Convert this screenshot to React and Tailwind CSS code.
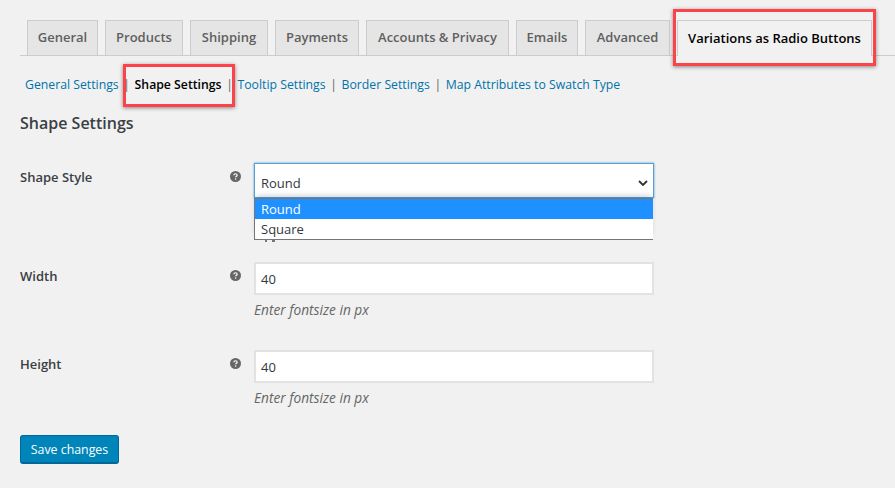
import React from 'react';

const tabs = [
  { label: 'General', w: 'w-[71px]' },
  { label: 'Products', w: 'w-[78px]' },
  { label: 'Shipping', w: 'w-[78px]' },
  { label: 'Payments', w: 'w-[84px]' },
  { label: 'Accounts & Privacy', w: 'w-[143px]' },
  { label: 'Emails', w: 'w-[62px]' },
  { label: 'Advanced', w: 'w-[85px]' },
];

const links = ['General Settings', 'Shape Settings', 'Tooltip Settings', 'Border Settings', 'Map Attributes to Swatch Type'];

const HelpIcon = () => (
  <svg viewBox="0 0 12 12" className="w-[11px] h-[11px]">
    <circle cx="6" cy="6" r="6" fill="#666" />
    <path d="M4.2 4.6c0-1 .8-1.6 1.8-1.6s1.8.6 1.8 1.5c0 1.3-1.6 1.3-1.6 2.4" fill="none" stroke="#fff" strokeWidth="1.3" />
    <rect x="5.4" y="8" width="1.4" height="1.4" fill="#fff" />
  </svg>
);

const Field = ({ label, className }) => (
  <div className={`flex pl-[20px] ${className}`}>
    <div className="w-[210px] pt-[5px] text-[13px] leading-[18px] font-semibold text-[#3a3f44]">{label}</div>
    <div className="w-[24px] pt-[8px]"><HelpIcon /></div>
    <div>
      <div className="w-[400px] h-[33px] bg-white border-2 border-[#e2e2e2] px-[5px] pt-[2px] flex items-center text-[13px] text-[#32373c]">40</div>
      <p className="mt-[6px] text-[13.7px] leading-[18px] italic text-[#666]">Enter fontsize in px</p>
    </div>
  </div>
);

export default function App() {
  return (
    <div className="relative w-[895px] h-[488px] overflow-hidden bg-[#f1f1f1] font-['Open_Sans','Noto_Sans',sans-serif] text-[13px]">
      {/* Tabs */}
      <div className="pt-[20px] pl-[20px]">
        <div className="flex gap-[7px] pl-[7px] h-[36px] border-b border-[#ccc]">
          {tabs.map((t) => (
            <div key={t.label} className={`${t.w} h-[35px] flex items-center justify-center bg-[#e5e5e5] border border-b-0 border-[#ccc] text-[13px] font-semibold text-[#5f5f5f]`}>
              {t.label}
            </div>
          ))}
          <div className="relative w-[195px] h-[36px] flex items-center justify-center bg-[#f1f1f1] border border-b-0 border-[#ccc] text-[13px] font-semibold text-black">
            Variations as Radio Buttons
            <div className="absolute left-[-5px] top-[-12px] right-[-5px] bottom-[-10px] border-[3px] border-[#fb4349] shadow-[0_1px_4px_rgba(0,0,0,0.45)]"></div>
          </div>
        </div>
      </div>

      {/* Sub navigation */}
      <div className="flex items-center mt-[20px] pl-[25px] h-[18px] text-[12.25px] leading-[18px] text-[#0073aa]">
        {links.map((l, i) => (
          <React.Fragment key={l}>
            {i > 0 && <span className="px-[4.6px] text-[#666]">|</span>}
            {i === 1 ? (
              <span className="relative font-semibold text-black">
                {l}
                <span className="absolute left-[-12px] top-[-12px] right-[-13px] bottom-[-13px] border-[3px] border-[#fb4349] shadow-[0_1px_4px_rgba(0,0,0,0.45)]"></span>
              </span>
            ) : (
              <span>{l}</span>
            )}
          </React.Fragment>
        ))}
      </div>

      <h2 className="mt-[17px] pl-[20px] text-[16px] leading-[24px] font-semibold text-[#3a3f44]">Shape Settings</h2>

      {/* Shape style */}
      <div className="flex pl-[20px] mt-[28px] h-[99px]">
        <div className="w-[210px] pt-[5px] text-[13px] leading-[18px] font-semibold text-[#3a3f44]">Shape Style</div>
        <div className="w-[24px] pt-[8px]"><HelpIcon /></div>
        <div className="relative">
          <div className="w-[400px] h-[35px] bg-white border border-[#5b9dd9] shadow-[0_0_2px_rgba(30,140,190,0.8)] pl-[6px] pr-[5px] pt-[6px] flex items-center justify-between text-[13px] text-[#32373c]">
            Round
            <svg viewBox="0 0 10 6" className="w-[10px] h-[6px] mb-[2px]">
              <path d="M1 1l4 4 4-4" fill="none" stroke="#333" strokeWidth="1.8" />
            </svg>
          </div>
          {/* bits of the hidden description that stick out under the open list */}
          <div className="flex gap-[5px] mt-[42px] ml-[11px]">
            <div className="w-[2px] h-[2px] bg-[#777]"></div>
            <div className="w-[3px] h-[2px] bg-[#777]"></div>
          </div>
          <div className="absolute left-0 top-[35px] w-[399px] bg-white border border-r-0 border-[#767676] shadow-[0_-4px_6px_-2px_rgba(0,0,0,0.2)] text-[13px] leading-[20px] text-[#32373c]">
            <div className="bg-[#1e90ff] text-white pl-[6px]">Round</div>
            <div className="pl-[6px]">Square</div>
          </div>
        </div>
      </div>

      <Field label="Width" />
      <Field label="Height" className="mt-[31px]" />

      <div className="pl-[20px] mt-[28px]">
        <button className="w-[99px] h-[29px] rounded-[3px] bg-[#0085ba] border border-[#006799] border-b-2 pt-[2px] text-[12.35px] text-white">Save changes</button>
      </div>
    </div>
  );
}
